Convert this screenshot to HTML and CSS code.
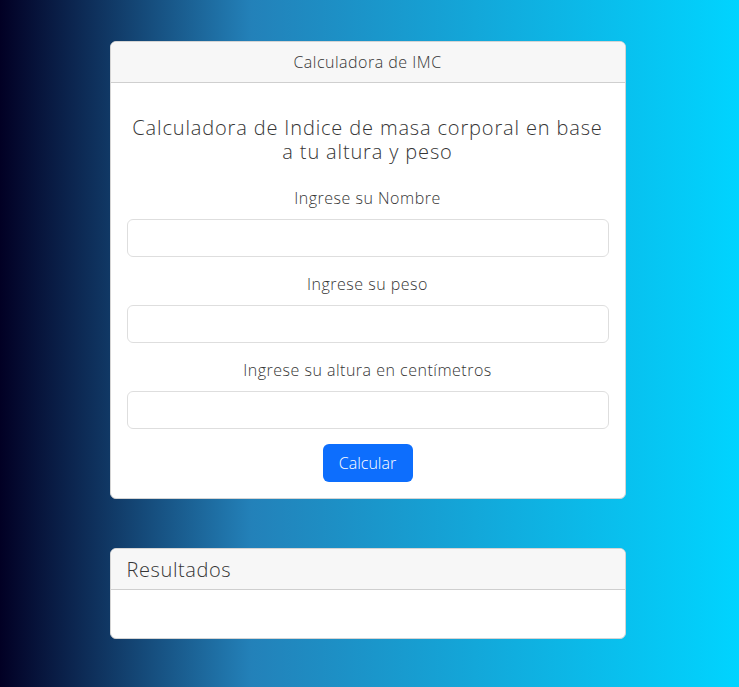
FILE: index.html
```html
<!DOCTYPE html>
<html lang="es">
<head>
<meta charset="utf-8">
<title>Calculadora de IMC</title>
<link rel="stylesheet" href="styles.css">
</head>
<body>
<main class="container">
  <section class="card">
    <header class="card-header center">Calculadora de IMC</header>
    <div class="card-body">
      <h2 class="title">Calculadora de Indice de masa corporal en base a tu altura y peso</h2>
      <div class="field">
        <label class="label" for="nombre">Ingrese su Nombre</label>
        <input class="input" id="nombre" type="text">
      </div>
      <div class="field">
        <label class="label" for="peso">Ingrese su peso</label>
        <input class="input" id="peso" type="text">
      </div>
      <div class="field">
        <label class="label" for="altura">Ingrese su altura en centímetros</label>
        <input class="input" id="altura" type="text">
      </div>
      <div class="actions">
        <button class="btn" type="button">Calcular</button>
      </div>
    </div>
  </section>
  <section class="card results">
    <header class="card-header large">Resultados</header>
    <div class="card-body empty"></div>
  </section>
</main>
</body>
</html>
```
FILE: styles.css
```css
* { box-sizing: border-box; }
html, body { height: 100%; }
body {
  margin: 0;
  min-height: 687px;
  background: linear-gradient(90deg, #020024 0%, #2381b9 34%, #00d4ff 100%);
  font-family: "Open Sans", "DejaVu Sans", sans-serif;
  font-weight: 350;
  letter-spacing: 0.5px;
  color: #353535;
}
.container {
  width: 516px;
  margin: 0 auto;
  padding-top: 41px;
  position: relative;
  left: -2px;
}
.card {
  background: #fff;
  border: 1px solid #d4d4d4;
  border-radius: 6px;
  overflow: hidden;
}
.card-header {
  background: #f7f7f7;
  border-bottom: 1px solid #cfcfcf;
  height: 41px;
  display: flex;
  align-items: center;
  padding: 0 16px;
  font-size: 16px;
}
.card-header.center { justify-content: center; }
.card-header.large { font-size: 20px; letter-spacing: 0.6px; }
.card-body { padding: 16px; }
.title {
  margin: 17px 0 22px;
  font-size: 20px;
  line-height: 24px;
  font-weight: 350;
  letter-spacing: 0.85px;
  text-align: center;
}
.field {
  display: flex;
  flex-direction: column;
  margin-bottom: 15px;
}
.field:last-of-type { margin-bottom: 16px; }
.label {
  text-align: center;
  font-size: 16px;
  line-height: 24px;
  margin-bottom: 9px;
}
.input {
  height: 38px;
  border: 1px solid #dedede;
  border-radius: 6px;
  background: #fff;
  font: inherit;
  padding: 6px 12px;
}
.actions { display: flex; justify-content: center; }
.btn {
  width: 90px;
  height: 38px;
  background: #0d6efd;
  color: #fff;
  border: 0;
  border-radius: 6px;
  font: inherit;
  font-size: 16px;
}
.results { margin-top: 49px; }
.card-body.empty { height: 48px; }
```
